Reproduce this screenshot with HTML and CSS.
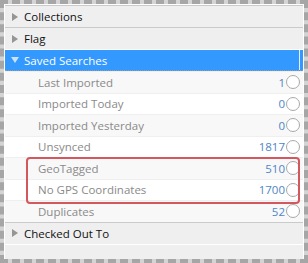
FILE: index.html
```html
<!DOCTYPE html>
<html lang="en">
<head>
    <meta charset="UTF-8">
    <title>Saved Searches</title>
    <link rel="stylesheet" href="styles.css">
</head>
<body>
    <div class="frame">
        <div class="tree">
            <div class="group">
                <span class="arrow"></span>
                <span class="label">Collections</span>
            </div>
            <div class="group">
                <span class="arrow"></span>
                <span class="label">Flag</span>
            </div>
            <div class="group selected">
                <span class="arrow down"></span>
                <span class="label">Saved Searches</span>
            </div>

            <div class="item">
                <span class="name">Last Imported</span>
                <span class="count">1</span>
                <span class="radio"></span>
            </div>
            <div class="item">
                <span class="name">Imported Today</span>
                <span class="count">0</span>
                <span class="radio"></span>
            </div>
            <div class="item">
                <span class="name">Imported Yesterday</span>
                <span class="count">0</span>
                <span class="radio"></span>
            </div>
            <div class="item">
                <span class="name">Unsynced</span>
                <span class="count">1817</span>
                <span class="radio"></span>
            </div>
            <div class="item">
                <span class="name">GeoTagged</span>
                <span class="count">510</span>
                <span class="radio"></span>
            </div>
            <div class="item">
                <span class="name">No GPS Coordinates</span>
                <span class="count">1700</span>
                <span class="radio"></span>
            </div>
            <div class="item">
                <span class="name">Duplicates</span>
                <span class="count">52</span>
                <span class="radio"></span>
            </div>

            <div class="group">
                <span class="arrow"></span>
                <span class="label">Checked Out To</span>
            </div>
            <div class="group empty"></div>

            <!-- annotation box -->
            <div class="highlight"></div>
        </div>
    </div>
</body>
</html>
```

FILE: styles.css
```css
/* Reset */
body {
    margin: 0;
    padding: 0;
    font-family: 'Open Sans', 'Noto Sans', sans-serif;
    font-size: 11.5px;
}

/* Torn screenshot edge */
.frame {
    width: 308px;
    height: 263px;
    box-sizing: border-box;
    border: 4px dashed #a6a6a6;
    background-color: #d4d4d4;
}

.tree {
    position: relative;
    height: 100%;
    background-color: #fff;
    padding: 1px 1px 0 1px;
    box-sizing: border-box;
}

/* Top level rows */
.group {
    height: 21px;
    display: flex;
    align-items: center;
    background-color: #efefef;
    border-top: 1px solid #cacaca;
    color: #111;
}

.group.empty {
    height: 14px;
    border-top-color: #fff;
}

.group .arrow {
    width: 0;
    height: 0;
    margin-left: 7px;
    margin-right: 6px;
    border-top: 4px solid transparent;
    border-bottom: 4px solid transparent;
    border-left: 6px solid #959595;
}

.group .arrow.down {
    border-left: 4px solid transparent;
    border-right: 4px solid transparent;
    border-top: 6px solid #c8e2ff;
    border-bottom: 0;
    margin-left: 6px;
    margin-right: 5px;
}

.group.selected {
    background-color: #3399ff;
    color: #fff;
    height: 20px;
    border-top-color: #fff;
    border-bottom: 1px dotted #9a9a9a;
    box-shadow: inset -3px 0 0 #3399ff, inset -4px 0 0 #e6f1ff;
}

/* Saved search rows */
.item {
    height: 21.5px;
    display: flex;
    align-items: center;
    padding-left: 33px;
    padding-right: 3px;
    color: #8a8a8a;
    border-top: 1px solid #efefef;
    box-sizing: border-box;
}

.item:nth-of-type(even) {
    background-color: #f8f8f8;
}

.item .name {
    flex: 1;
}

.item .count {
    color: #4f86c6;
}

.item .radio {
    width: 12px;
    height: 12px;
    margin-left: 1px;
    border: 1px solid #a8a8a8;
    border-radius: 50%;
    background-color: #fff;
}

/* Red annotation box */
.highlight {
    position: absolute;
    left: 22px;
    top: 153px;
    width: 270px;
    height: 43px;
    border: 2.5px solid #d3575d;
    border-radius: 4px;
}
```
